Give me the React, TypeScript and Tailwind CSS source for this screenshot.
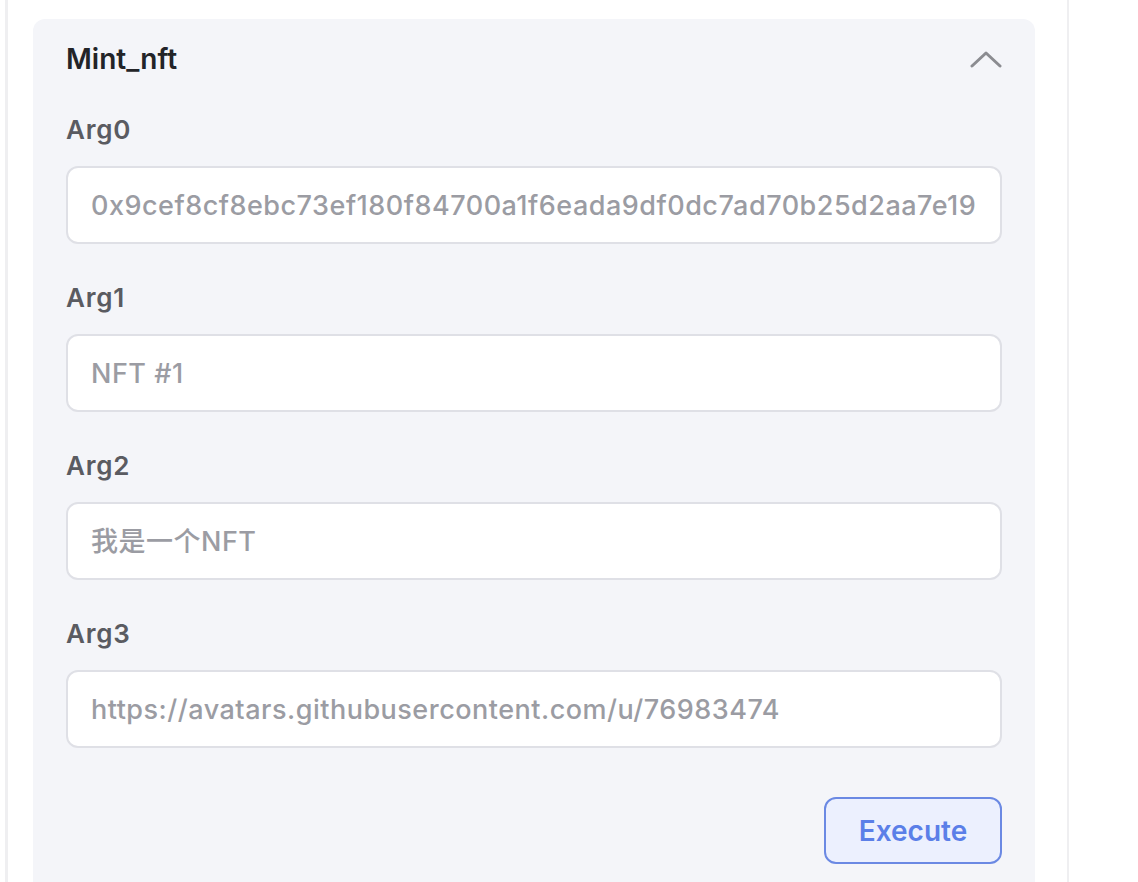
import React from 'react';

const fields = [
  { label: 'Arg0', value: '0x9cef8cf8ebc73ef180f84700a1f6eada9df0dc7ad70b25d2aa7e19c4b3f2e1d0' },
  { label: 'Arg1', value: 'NFT #1' },
  { label: 'Arg2', value: '我是一个NFT' },
  { label: 'Arg3', value: 'https://avatars.githubusercontent.com/u/76983474' },
];

const ChevronUp = () => (
  <svg width="32" height="20" viewBox="0 0 32 20" fill="none">
    <path d="M2 17 L16 4 L30 17" stroke="#8b8c91" strokeWidth="3" strokeLinecap="round" strokeLinejoin="round" />
  </svg>
);

export default function App() {
  return (
    <div
      className="h-[882px] overflow-hidden bg-white pl-[5px]"
      style={{ fontFamily: 'Inter, "Noto Sans CJK SC", sans-serif' }}
    >
      <div className="h-full w-[1064px] border-l-[3px] border-r-[2px] border-[#efeff1] pl-[25px] pr-[32px] pt-[19px]">
        {/* Function card */}
        <div className="rounded-[12px] bg-[#f4f5f9] px-[33px] pb-[40px] pt-[22px]">
          <div className="flex h-[36px] items-center justify-between">
            <h2 className="text-[28px] font-semibold leading-[36px] text-[#232428]">Mint_nft</h2>
            <ChevronUp />
          </div>

          <div className="mt-[37px] flex flex-col gap-[38px]">
            {fields.map((f) => (
              <div key={f.label} className="flex flex-col gap-[20px]">
                <label className="text-[26px] font-semibold leading-[32px] tracking-[0.8px] text-[#5a5b61]">{f.label}</label>
                <input
                  readOnly
                  placeholder={f.value}
                  className="h-[78px] w-full rounded-[12px] border-2 border-[#dfe0e6] bg-white px-[23px] text-[27px] font-medium tracking-[0.5px] text-[#1f2024] outline-none placeholder:text-[#9b9ca3]"
                />
              </div>
            ))}
          </div>

          <div className="mt-[49px] flex justify-end">
            <button className="h-[67px] w-[178px] rounded-[12px] border-2 border-[#6b89e3] bg-[#ecf0fe] text-[28px] font-semibold text-[#5b7fe8]">
              Execute
            </button>
          </div>
        </div>
      </div>
    </div>
  );
}
